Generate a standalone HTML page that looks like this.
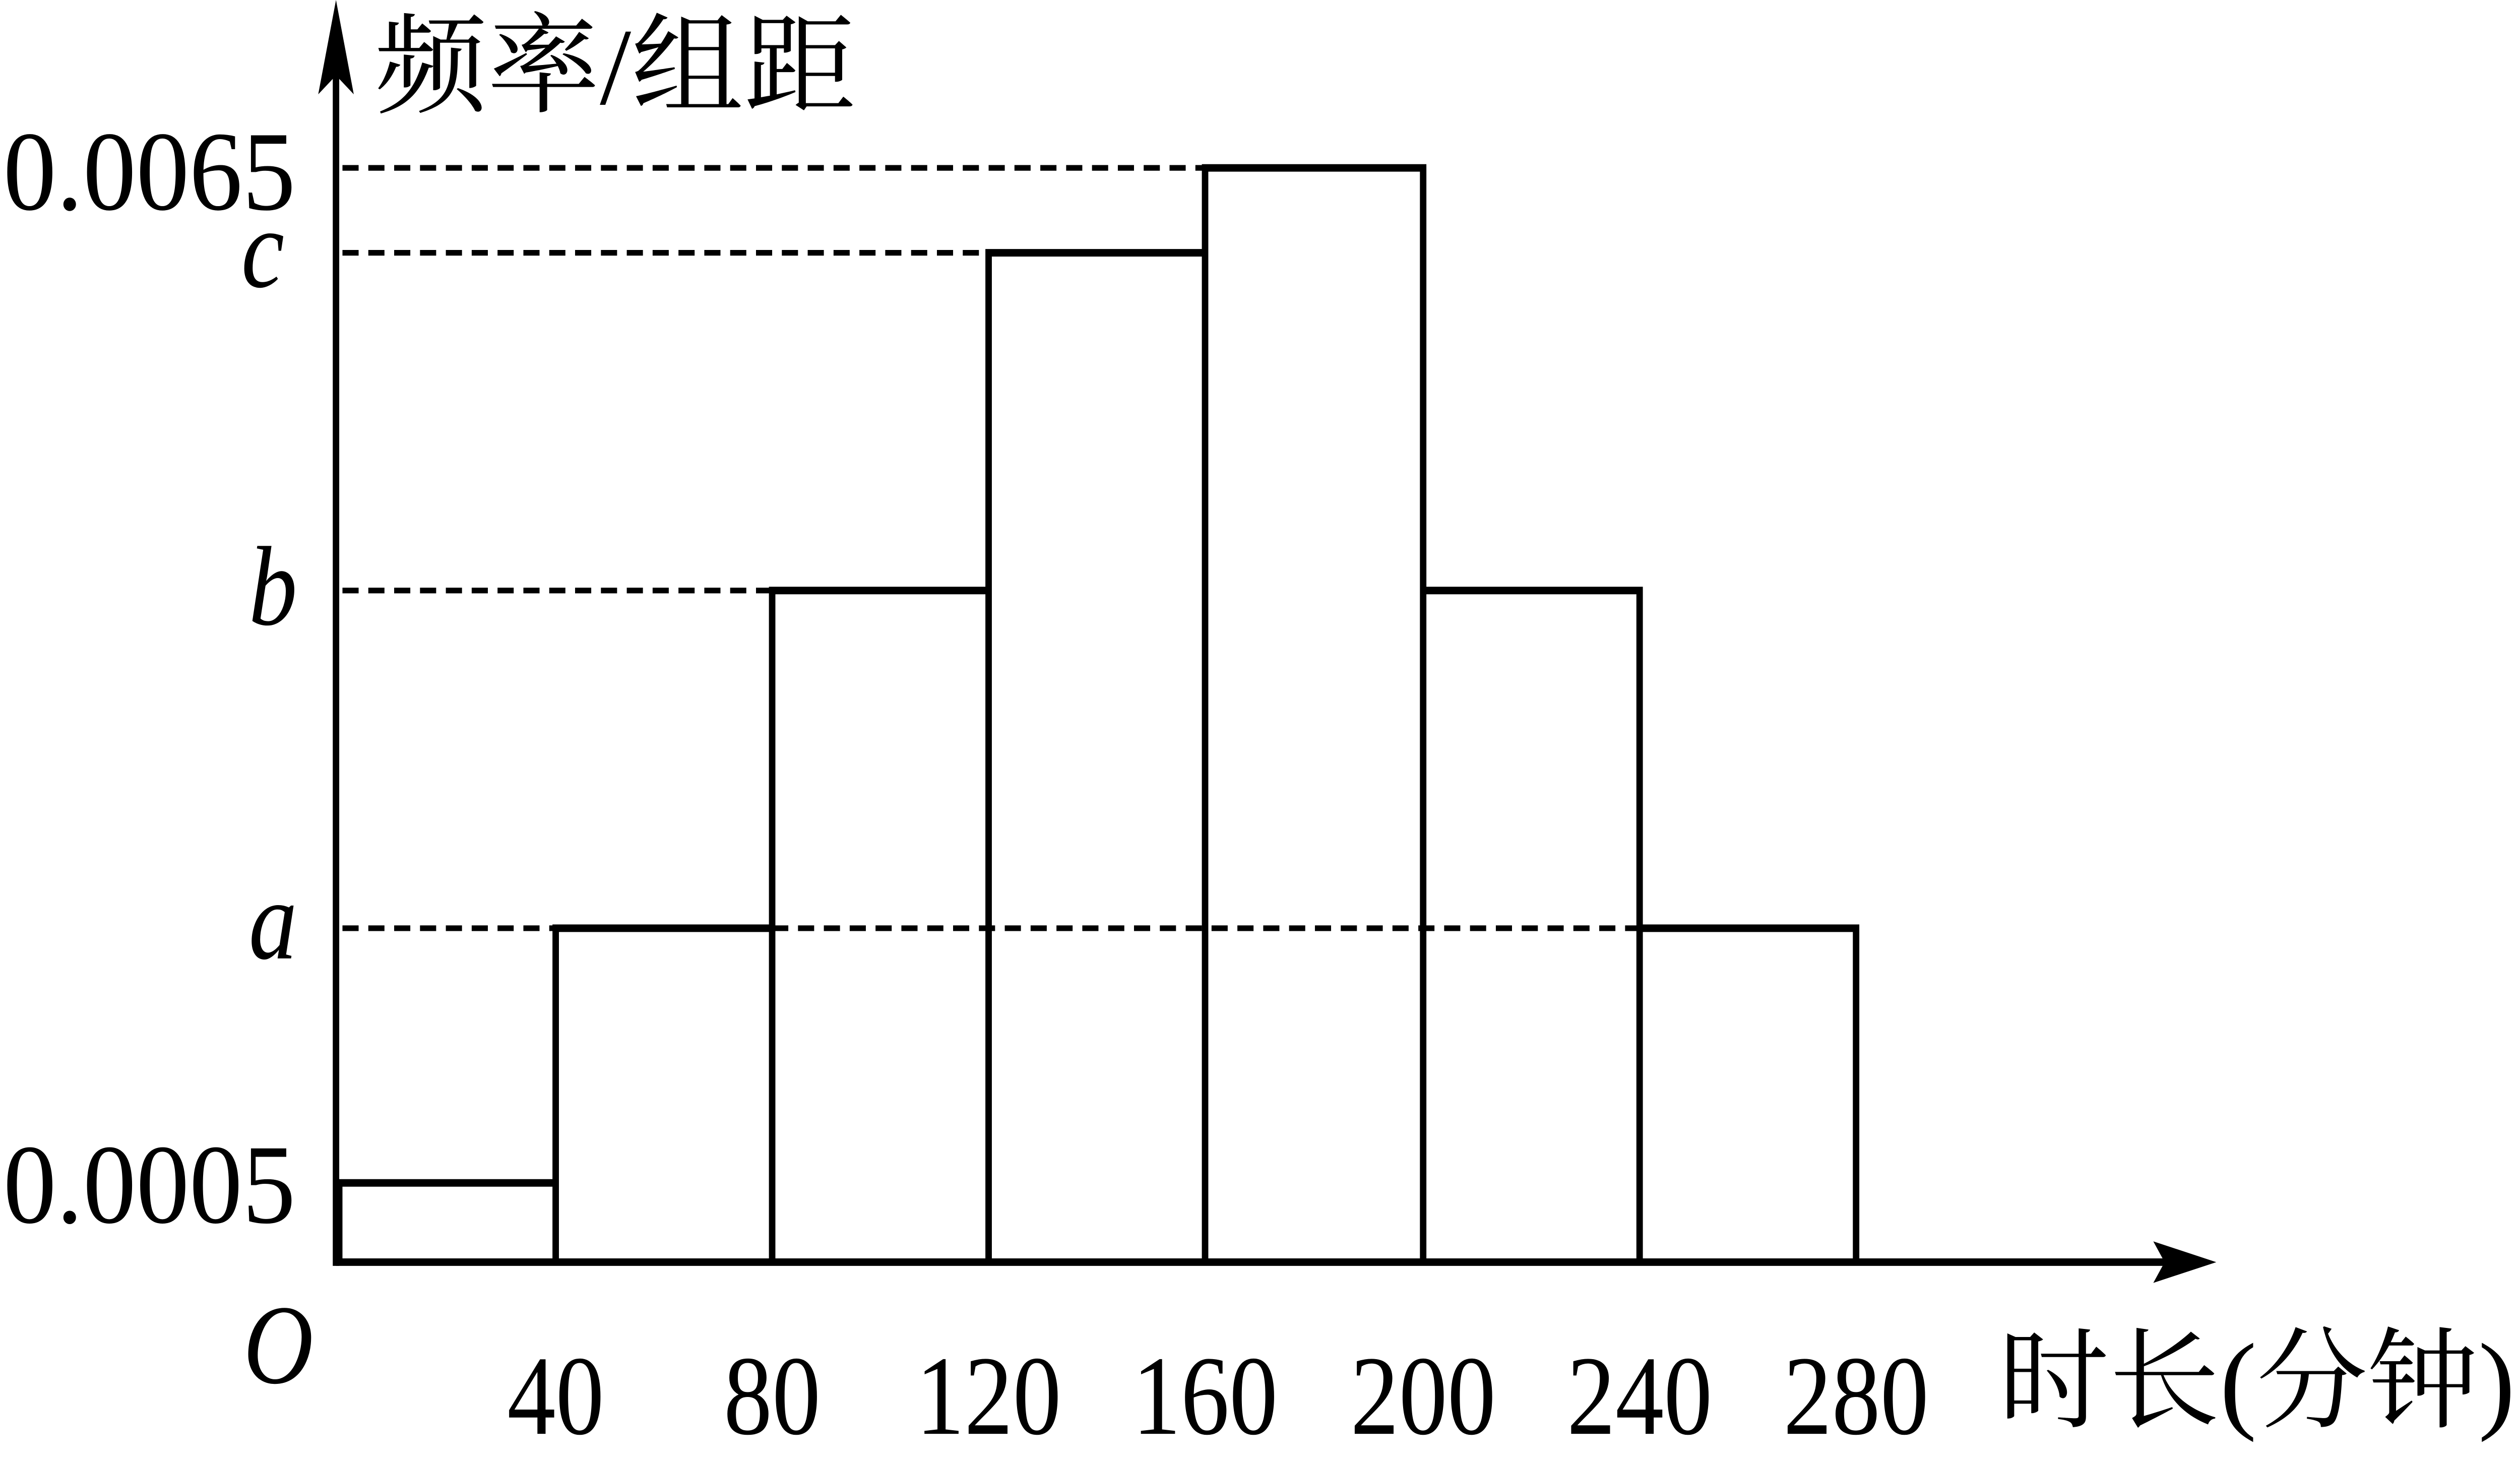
<!DOCTYPE html>
<html><head><meta charset="utf-8"><style>html,body{margin:0;padding:0;background:#fff;width:100%;height:100%;overflow:hidden}svg{display:block;width:100vw;height:100vh}</style></head>
<body>
<svg viewBox="0 0 1560 776" preserveAspectRatio="none" xmlns="http://www.w3.org/2000/svg">
<g stroke="#000" stroke-width="4" fill="none">
<line x1="208" y1="669" x2="1345" y2="669"/>
<line x1="208" y1="671" x2="208" y2="25"/>
<g stroke-dasharray="10,6" stroke-width="3">
<line x1="212" y1="89" x2="746" y2="89"/>
<line x1="212" y1="134" x2="612" y2="134"/>
<line x1="212" y1="313" x2="478" y2="313"/>
<line x1="212" y1="492" x2="344" y2="492"/>
<line x1="478" y1="492" x2="1015" y2="492"/>
</g>
<path d="M210 669V627H344V669 M344 669V492H478V669 M478 669V313H612V669 M612 669V134H746V669 M746 669V89H881V669 M881 669V313H1015V669 M1015 669V492H1149V669"/>
</g>
<path d="M208 0 L219 50 L208 40 L197 50 Z" fill="#000"/>
<path d="M1372 669 L1333 658 L1340 669 L1333 680 Z" fill="#000"/>
<g font-family="'Liberation Serif', serif" font-size="60" fill="#000">
<text x="183" y="111" text-anchor="end" textLength="181" lengthAdjust="spacingAndGlyphs">0.0065</text>
<text x="183" y="648" text-anchor="end" textLength="181" lengthAdjust="spacingAndGlyphs">0.0005</text>
<g font-style="italic">
<text x="176" y="152" text-anchor="end">c</text>
<text x="184" y="331" text-anchor="end">b</text>
<text x="184" y="508" text-anchor="end">a</text>
<text x="194" y="733" text-anchor="end">O</text>
</g>
<g text-anchor="middle">
<text x="344" y="760">40</text>
<text x="478" y="760">80</text>
<text x="612" y="760">120</text>
<text x="746" y="760">160</text>
<text x="881" y="760">200</text>
<text x="1015" y="760">240</text>
<text x="1149" y="760">280</text>
</g>
</g>
<g font-family="'Liberation Serif','Noto Serif CJK SC',serif" font-size="58" fill="#000">
<text x="232" y="55" textLength="298" lengthAdjust="spacingAndGlyphs">频率/组距</text>
<text x="1237" y="752" textLength="320" lengthAdjust="spacingAndGlyphs">时长(分钟)</text>
</g>
</svg>
</body></html>
